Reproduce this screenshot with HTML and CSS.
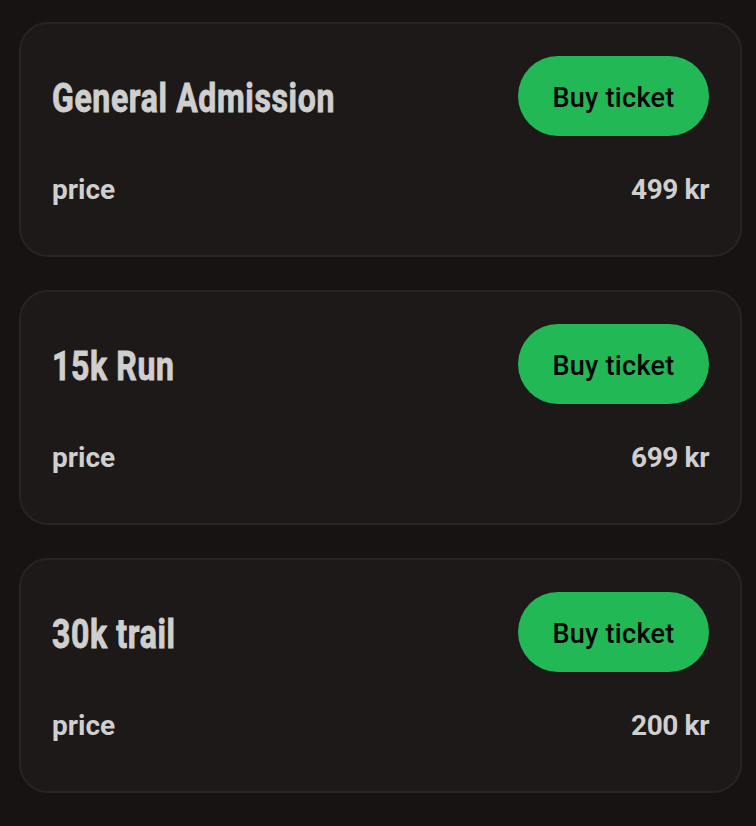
FILE: index.html
```html
<!DOCTYPE html>
<html>
<head>
<meta charset="utf-8">
<link rel="stylesheet" href="styles.css">
</head>
<body>
<main class="list">
  <section class="card">
    <div class="head">
      <h2 class="title">General Admission</h2>
      <button class="buy">Buy ticket</button>
    </div>
    <div class="price-row">
      <span class="label">price</span>
      <span class="amount">499 kr</span>
    </div>
  </section>
  <section class="card">
    <div class="head">
      <h2 class="title">15k Run</h2>
      <button class="buy">Buy ticket</button>
    </div>
    <div class="price-row">
      <span class="label">price</span>
      <span class="amount">699 kr</span>
    </div>
  </section>
  <section class="card">
    <div class="head">
      <h2 class="title">30k trail</h2>
      <button class="buy">Buy ticket</button>
    </div>
    <div class="price-row">
      <span class="label">price</span>
      <span class="amount">200 kr</span>
    </div>
  </section>
</main>
</body>
</html>
```
FILE: styles.css
```css
html, body {
  margin: 0;
  padding: 0;
  background: #161312;
}
body {
  font-family: Roboto, "Liberation Sans", sans-serif;
  color: #cfcfcf;
}
.list {
  display: flex;
  flex-direction: column;
  gap: 33px;
  padding: 22px 14px 0 19px;
}
.card {
  background: #1c1918;
  border: 2px solid #272423;
  border-radius: 29px;
  padding: 32px 31px 0 31px;
  height: 235px;
  box-sizing: border-box;
}
.head {
  display: flex;
  justify-content: space-between;
  align-items: center;
  height: 80px;
}
.title {
  margin: 0;
  font-family: Roboto, "DejaVu Sans Condensed", sans-serif;
  font-weight: 700;
  font-size: 40px;
  letter-spacing: 0.8px;
  color: #cfcfcf;
  -webkit-text-stroke: 0.9px #cfcfcf;
  transform: scaleX(0.8);
  transform-origin: left center;
  white-space: nowrap;
  padding-top: 4px;
}
.buy {
  width: 191px;
  height: 80px;
  border: none;
  border-radius: 40px;
  background: #22b856;
  color: #050505;
  font-family: Roboto, "Liberation Sans", sans-serif;
  font-weight: 500;
  font-size: 27px;
  letter-spacing: 0.3px;
  padding: 3px 0 0 0;
}
.price-row {
  display: flex;
  justify-content: space-between;
  align-items: center;
  margin-top: 37px;
  font-size: 28px;
  font-weight: 700;
  color: #cfcfcf;
}
.amount {
  letter-spacing: -0.4px;
}
```
